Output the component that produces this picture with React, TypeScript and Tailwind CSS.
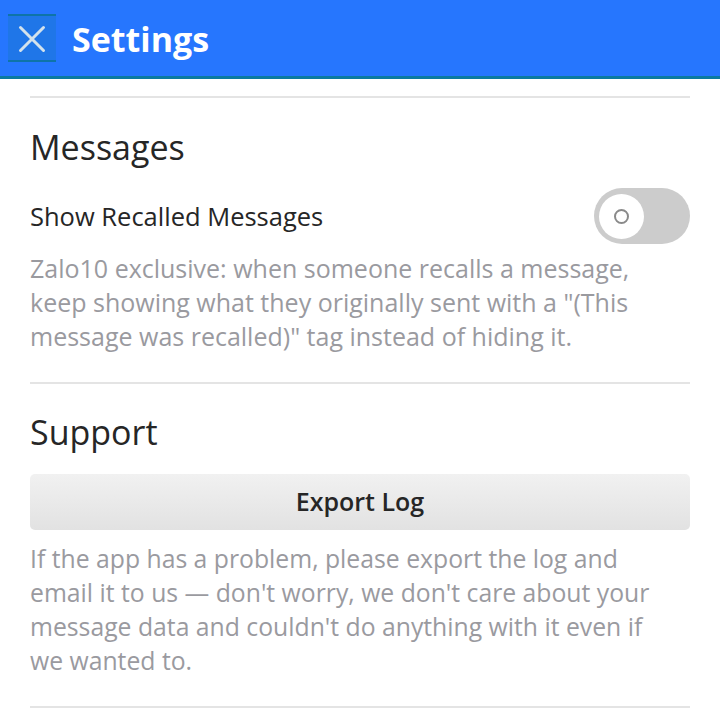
const font = { fontFamily: "'Open Sans', 'Noto Sans', sans-serif" }

function CloseIcon() {
  return (
    <svg width="48" height="48" viewBox="0 0 48 48" fill="none">
      <path d="M12.5 13.5L35.5 36.5M35.5 13.5L12.5 36.5" stroke="#d3e2ec" strokeWidth="3" strokeLinecap="round" />
    </svg>
  )
}

function Toggle() {
  return (
    <div className="flex h-[56px] w-[96px] shrink-0 items-center rounded-full bg-[#cccccc] px-[5px]">
      <div className="flex h-[45px] w-[45px] items-center justify-center rounded-full bg-white">
        <div className="h-[15px] w-[15px] rounded-full border-2 border-[#8a8a8a]" />
      </div>
    </div>
  )
}

export default function App() {
  return (
    <div className="h-[720px] w-[720px] overflow-hidden bg-white" style={font}>
      <header className="flex h-[79px] items-center gap-[16px] border-b-[3px] border-[#0b7aa0] bg-[#2676fe] pl-[8px]">
        <button className="flex h-[48px] w-[48px] items-center justify-center border-y-2 border-[#0e74a8] bg-[#1f76e8]">
          <CloseIcon />
        </button>
        <h1 className="pt-[3px] text-[34px] font-bold text-white">Settings</h1>
      </header>

      <main className="px-[30px]">
        <div className="mt-[17px] h-[2px] bg-[#e4e4e4]" />

        <section className="pt-[29px]">
          <h2 className="text-[34px] leading-[40px] text-[#262626]">Messages</h2>
          <div className="mt-[21px] flex items-center justify-between">
            <span className="text-[25.5px] text-[#262626]">Show Recalled Messages</span>
            <Toggle />
          </div>
          <p className="mt-[7px] whitespace-nowrap text-[25px] leading-[34px] text-[#9a9a9f]">
            Zalo10 exclusive: when someone recalls a message,
            <br />
            keep showing what they originally sent with a "(This
            <br />
            message was recalled)" tag instead of hiding it.
          </p>
        </section>

        <div className="mt-[29px] h-[2px] bg-[#e4e4e4]" />

        <section className="pt-[28px]">
          <h2 className="text-[34px] leading-[40px] text-[#262626]">Support</h2>
          <button className="mt-[22px] flex h-[56px] w-full items-center justify-center rounded-[5px] bg-gradient-to-b from-[#f1f1f1] to-[#e2e2e2] text-[25px] font-semibold text-[#262626]">
            Export Log
          </button>
          <p className="mt-[12px] whitespace-nowrap text-[24.75px] leading-[34px] text-[#9a9a9f]">
            If the app has a problem, please export the log and
            <br />
            email it to us — don't worry, we don't care about your
            <br />
            message data and couldn't do anything with it even if
            <br />
            we wanted to.
          </p>
        </section>

        <div className="mt-[28px] h-[2px] bg-[#e4e4e4]" />
      </main>
    </div>
  )
}
